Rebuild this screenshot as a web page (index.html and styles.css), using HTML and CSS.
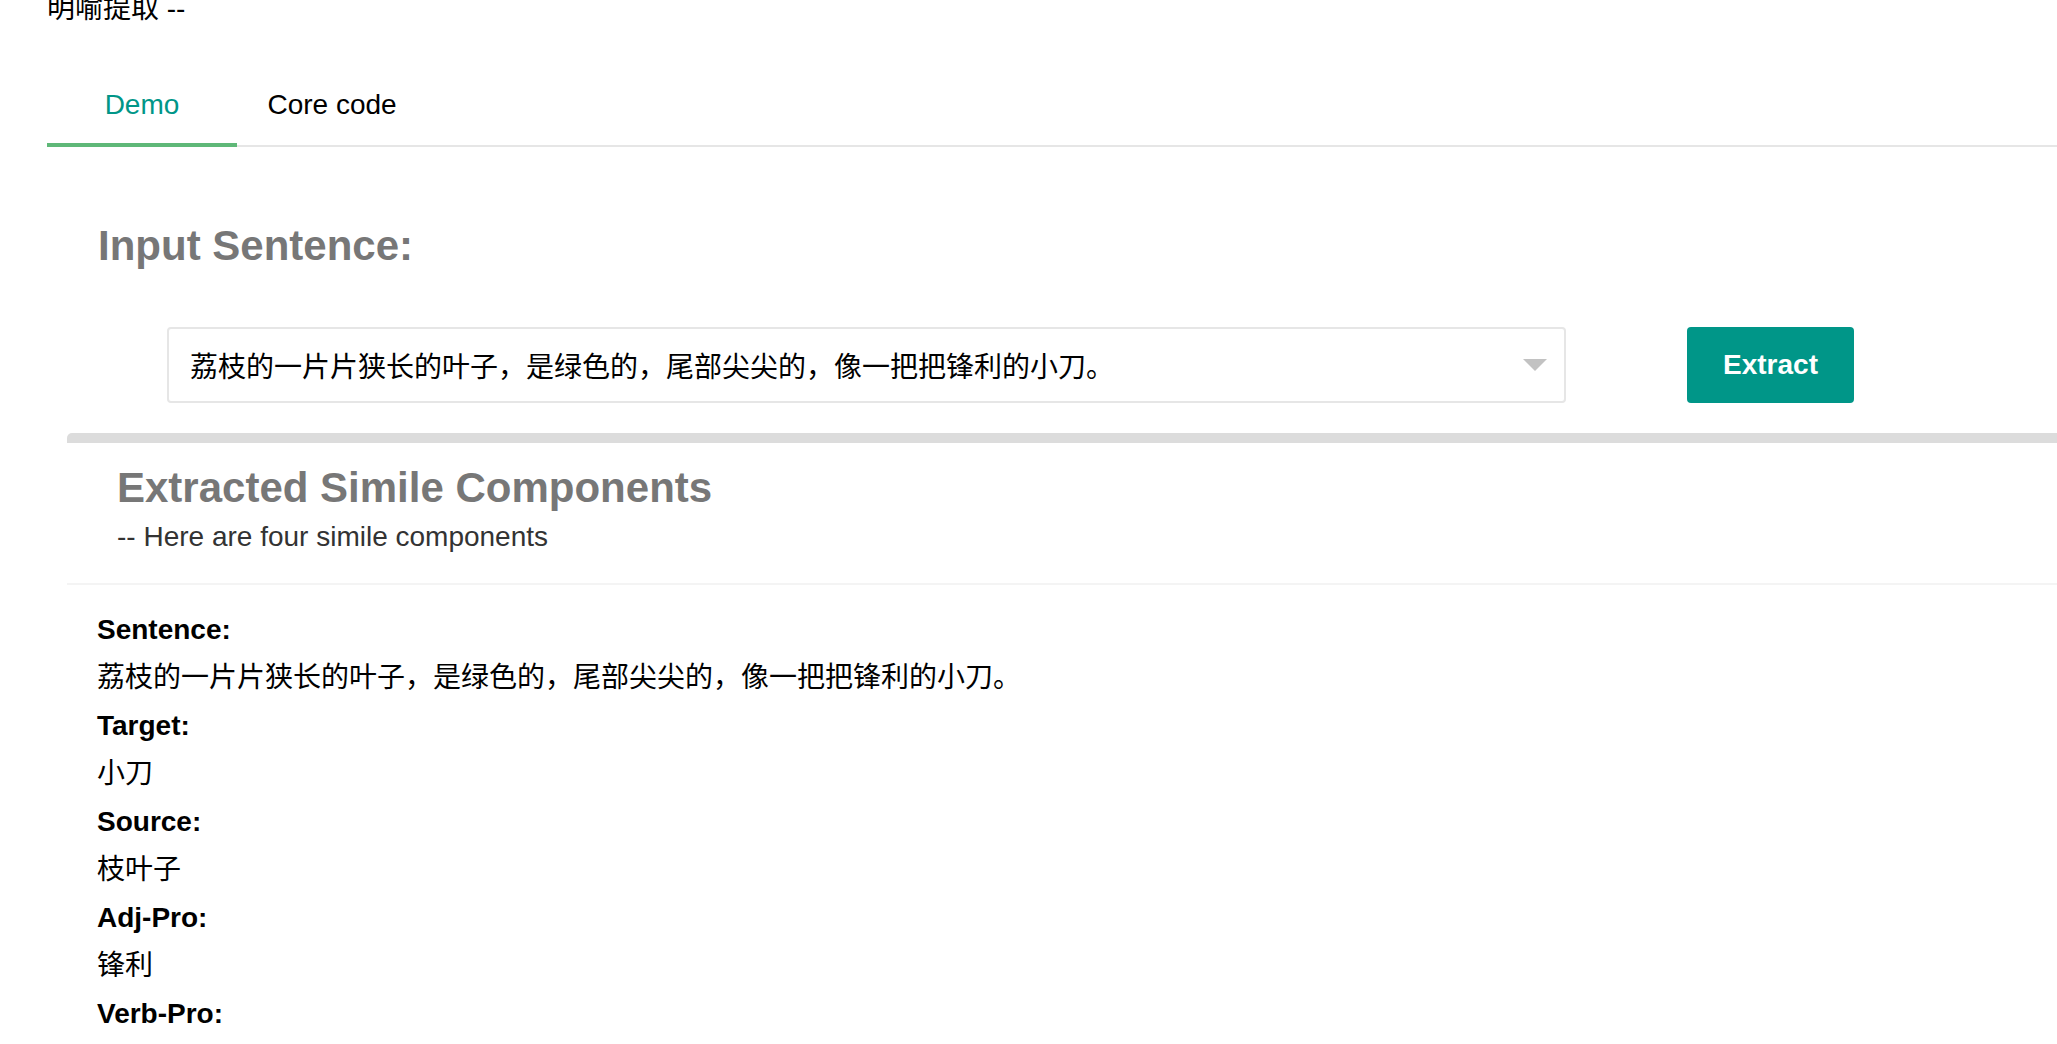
FILE: index.html
```html
<!DOCTYPE html>
<html lang="zh-CN">
<head>
<meta charset="utf-8">
<title>明喻提取</title>
<link rel="stylesheet" href="styles.css">
</head>
<body>
<div class="page">
  <div class="title">明喻提取 --</div>

  <div class="tabs">
    <ul class="tab-title">
      <li class="tab active">Demo</li>
      <li class="tab">Core code</li>
    </ul>

    <div class="tab-content">
      <h2 class="section-heading">Input Sentence:</h2>

      <div class="input-row">
        <div class="select">
          <div class="select-value">荔枝的一片片狭长的叶子，是绿色的，尾部尖尖的，像一把把锋利的小刀。</div>
          <i class="edge"></i>
        </div>
        <button class="btn">Extract</button>
      </div>

      <div class="card">
        <div class="card-header">
          <div class="card-title">Extracted Simile Components</div>
          <div class="card-sub">-- Here are four simile components</div>
        </div>
        <div class="card-body">
          <div class="row label">Sentence:</div>
          <div class="row">荔枝的一片片狭长的叶子，是绿色的，尾部尖尖的，像一把把锋利的小刀。</div>
          <div class="row label">Target:</div>
          <div class="row">小刀</div>
          <div class="row label">Source:</div>
          <div class="row">枝叶子</div>
          <div class="row label">Adj-Pro:</div>
          <div class="row">锋利</div>
          <div class="row label">Verb-Pro:</div>
          <div class="row"></div>
        </div>
      </div>
    </div>
  </div>
</div>
</body>
</html>
```

FILE: styles.css
```css
html, body {
  margin: 0;
  padding: 0;
  background: #fff;
}

body {
  font-family: "Liberation Sans", "Noto Sans CJK SC", sans-serif;
  font-size: 28px;
  color: #000;
  overflow: hidden;
}

.page {
  padding-left: 47px;
}

.title {
  line-height: 28px;
  margin-top: -5px;
  color: #000;
}

.tabs {
  margin-top: 42px;
}

.tab-title {
  list-style: none;
  margin: 0;
  padding: 0;
  display: flex;
  height: 80px;
  border-bottom: 2px solid #e6e6e6;
  box-sizing: content-box;
}

.tab {
  position: relative;
  min-width: 130px;
  padding: 0 30px;
  line-height: 80px;
  text-align: center;
  color: #000;
}

.tab.active {
  color: #009688;
}

.tab.active::after {
  content: "";
  position: absolute;
  left: 0;
  right: 0;
  bottom: -2px;
  height: 4px;
  background: #5fb878;
}

.tab-content {
  padding-left: 48px;
}

.section-heading {
  margin: 78px 0 0 3px;
  font-size: 42px;
  line-height: 42px;
  font-weight: bold;
  color: #777;
}

.input-row {
  display: flex;
  align-items: center;
  margin-top: 60px;
  margin-left: 72px;
}

.select {
  position: relative;
  width: 1399px;
  height: 76px;
  box-sizing: border-box;
  border: 2px solid #e6e6e6;
  border-radius: 4px;
  background: #fff;
  display: flex;
  align-items: center;
  padding-left: 21px;
}

.select-value {
  color: #000;
  white-space: nowrap;
}

.edge {
  position: absolute;
  right: 17px;
  top: 50%;
  margin-top: -6px;
  width: 0;
  height: 0;
  border-top: 12px solid #c2c2c2;
  border-left: 12px solid transparent;
  border-right: 12px solid transparent;
}

.btn {
  margin-left: 121px;
  width: 167px;
  height: 76px;
  border: none;
  border-radius: 4px;
  background: #009688;
  color: #fff;
  font-family: "Liberation Sans", sans-serif;
  font-size: 28px;
  font-weight: bold;
  padding: 0;
}

.card {
  margin-top: 30px;
  margin-left: -28px;
  border-top: 10px solid #dcdcdc;
  border-top-left-radius: 5px;
}

.card-header {
  padding: 24px 0 26px 50px;
  border-bottom: 2px solid #f4f4f4;
}

.card-title {
  font-size: 42px;
  line-height: 42px;
  font-weight: bold;
  color: #777;
}

.card-sub {
  margin-top: 8px;
  line-height: 40px;
  color: #333;
}

.card-body {
  padding: 21px 0 0 30px;
}

.row {
  height: 48px;
  line-height: 48px;
  white-space: nowrap;
  color: #000;
}

.row.label {
  font-weight: bold;
}
```
